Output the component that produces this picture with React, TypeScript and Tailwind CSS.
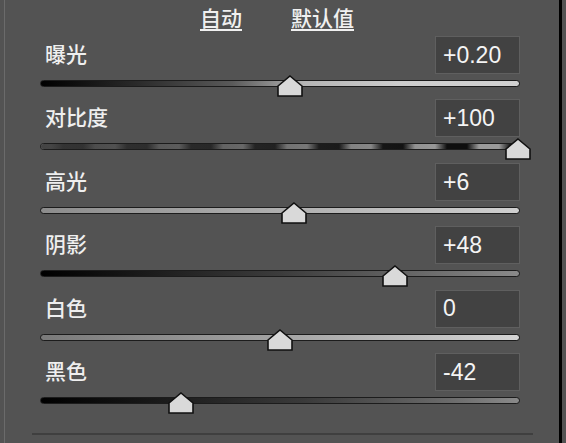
import React from "react";

type Row = { label: string; value: string; pos: number; track: string };

const rows: Row[] = [
  { label: "曝光", value: "+0.20", pos: 250, track: "bg-[linear-gradient(to_right,#000_0%,#2a2a2a_20%,#5a5a5a_40%,#b5b5b5_55%,#cdcdcd_75%,#d2d2d2_100%)]" },
  { label: "对比度", value: "+100", pos: 478, track: "contrast" },
  { label: "高光", value: "+6", pos: 254, track: "bg-[linear-gradient(to_right,#8c8c8c_0%,#a8a8a8_40%,#cfcfcf_100%)]" },
  { label: "阴影", value: "+48", pos: 355, track: "bg-[linear-gradient(to_right,#000_0%,#1e1e1e_25%,#3c3c3c_50%,#6a6a6a_80%,#8a8a8a_100%)]" },
  { label: "白色", value: "0", pos: 240, track: "bg-[linear-gradient(to_right,#7a7a7a_0%,#9a9a9a_40%,#d4d4d4_100%)]" },
  { label: "黑色", value: "-42", pos: 141, track: "bg-[linear-gradient(to_right,#000_0%,#1a1a1a_25%,#3a3a3a_55%,#6a6a6a_85%,#8a8a8a_100%)]" },
];

function Thumb({ left }: { left: number }) {
  return (
    <svg
      width="26"
      height="22"
      viewBox="0 0 26 22"
      className="absolute top-[-5px]"
      style={{ left: left - 13 }}
    >
      <polygon
        points="13,1 25,11 25,21 1,21 1,11"
        fill="#d9d9d9"
        stroke="#111"
        strokeWidth="1.6"
        strokeLinejoin="miter"
      />
    </svg>
  );
}

function Track({ row }: { row: Row }) {
  if (row.track === "contrast") {
    return (
      <div className="relative h-[7px] mt-[6px]">
        <div className="absolute inset-0 rounded-full border border-[#1c1c1c] overflow-hidden bg-[repeating-linear-gradient(to_right,#9a9a9a_0px,#9a9a9a_10px,#0e0e0e_22px,#0e0e0e_42px,#9a9a9a_54px,#9a9a9a_64px)]">
          <div className="absolute inset-0 bg-[linear-gradient(to_right,rgba(58,58,58,0.9)_0%,rgba(58,58,58,0.55)_40%,rgba(58,58,58,0)_85%)]" />
        </div>
        <Thumb left={row.pos} />
      </div>
    );
  }
  return (
    <div className="relative h-[7px] mt-[6px]">
      <div className={`absolute inset-0 rounded-full border border-[#1c1c1c] ${row.track}`} />
      <Thumb left={row.pos} />
    </div>
  );
}

export default function App() {
  return (
    <div className="w-[566px] h-[443px] bg-[#535353] pl-[4px] pr-[4px] overflow-hidden">
      <div className="h-full border-l border-l-[#6b6b6b] border-r-[3px] border-r-black flex flex-col">
        <div className="h-[36px] flex justify-center gap-[49px] pr-[10px] pt-[7px]">
          {["自动", "默认值"].map((t) => (
            <span
              key={t}
              className="text-[21px] leading-[21px] font-medium text-[#f0f0f0] underline decoration-[1.5px] underline-offset-[3px] font-['Noto_Sans_CJK_SC',sans-serif]"
            >
              {t}
            </span>
          ))}
        </div>
        <div className="flex flex-col pl-[35px] pr-[39px]">
          {rows.map((r) => (
            <div key={r.label} className="h-[63.4px]">
              <div className="flex justify-between items-start">
                <span className="pl-[5px] pt-[7px] text-[21px] leading-[20px] font-medium text-[#efefef] font-['Noto_Sans_CJK_SC',sans-serif]">
                  {r.label}
                </span>
                <div className="w-[85px] h-[38px] bg-[#424242] border border-[#5f5f5f] flex items-center pl-[7px] text-[23px] text-[#f4f4f4] font-['Liberation_Sans',Arial,sans-serif]">
                  {r.value}
                </div>
              </div>
              <Track row={r} />
            </div>
          ))}
        </div>
        <div className="mt-[17px] ml-[27px] w-[501px] h-[2px] bg-[#3f3f3f]" />
      </div>
    </div>
  );
}
